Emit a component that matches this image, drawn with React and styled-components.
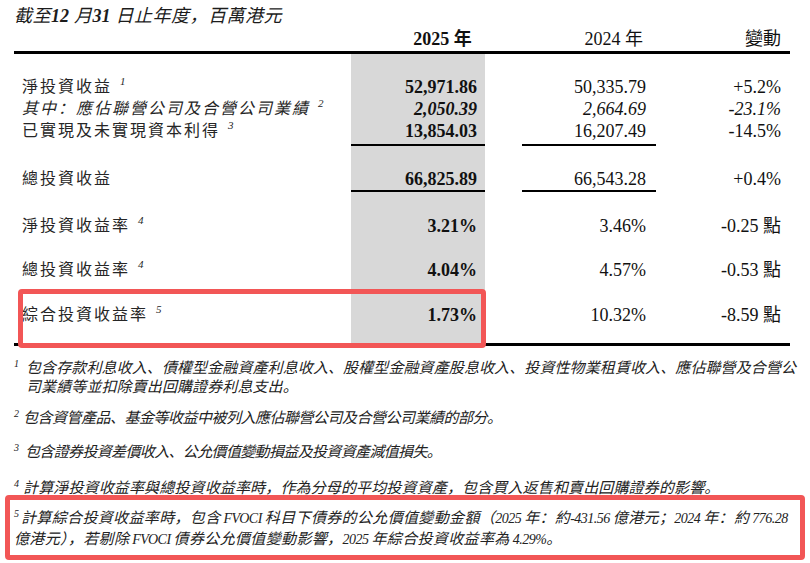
import React from 'react';
import styled, { createGlobalStyle, css } from 'styled-components';

const red = '#f25656';
const shade = '#d8d8d8';
const cjk = '"Liberation Serif", "Noto Sans CJK SC", "Noto Sans CJK TC", serif';

const GlobalStyle = createGlobalStyle`
  body {
    margin: 0;
    background: #fff;
    color: #111;
    font-family: ${cjk};
  }
`;

const Page = styled.div`
  width: 810px;
  box-sizing: border-box;
  padding: 5px 20px 0 14px;
`;

const Title = styled.div`
  font-size: 18px;
  line-height: 22px;
  font-style: italic;
  letter-spacing: 0.5px;
  color: #1c1c1c;
  white-space: nowrap;
`;

const TitleNum = styled.b`
  font-weight: bold;
  letter-spacing: 0;
`;

const Table = styled.div`
  width: 776px;
  border-bottom: 3px solid #000;
`;

const HeadRow = styled.div`
  display: flex;
  height: 24px;
  line-height: 24px;
  border-bottom: 3px solid #000;
  font-size: 18px;
`;

const Row = styled.div`
  display: flex;
  position: relative;
  line-height: 22px;
  font-style: ${p => (p.$italic ? 'italic' : 'normal')};

  & > * {
    box-sizing: border-box;
    padding-top: ${p => p.$pt || 0}px;
    padding-bottom: ${p => p.$pb || 0}px;
    min-height: ${p => p.$h || 0}px;
  }
`;

const Label = styled.div`
  width: 337px;
  padding-left: 8px;
  font-size: 16px;
  letter-spacing: 2px;
  color: #262626;
  white-space: nowrap;
`;

const Value = styled.div`
  width: 134px;
  text-align: right;
  font-size: 18px;
  padding-right: ${p => p.$pr}px;
  white-space: nowrap;
  font-weight: ${p => (p.$bold ? 'bold' : 'normal')};
  background: ${p => (p.$shade ? shade : 'transparent')};
  ${p =>
    p.$rule &&
    css`
      border-bottom: 2px solid #000;
    `}
`;

const Gap = styled.div`
  width: 37px;
`;

const Sup = styled.sup`
  font-family: "Liberation Serif", serif;
  font-style: italic;
  font-size: 11px;
  line-height: 0;
  vertical-align: 7px;
  letter-spacing: 0;
  margin-left: 8px;
`;

const Highlight = styled.div`
  position: absolute;
  z-index: 2;
  top: 8px;
  left: 4px;
  width: 468px;
  height: 59px;
  box-sizing: border-box;
  border: 5px solid ${red};
  border-radius: 4px;
  padding: 0 !important;
  min-height: 0 !important;
`;

const Notes = styled.div`
  padding-top: 13px;
`;

const Note = styled.div`
  margin-top: ${p => p.$mt}px;
  font-size: 15px;
  line-height: ${p => p.$lh || 19}px;
  font-style: italic;
  letter-spacing: ${p => p.$ls}px;
  color: #222;
  white-space: nowrap;
  padding-left: ${p => p.$hang || 0}px;
  text-indent: -${p => p.$hang || 0}px;
`;

const Mark = styled.span`
  display: inline-block;
  width: ${p => p.$w}px;
  text-indent: 0;
  font-family: "Liberation Serif", serif;
  font-size: 10px;
  letter-spacing: 0;
  vertical-align: 6px;
  line-height: 0;
`;

const Latin = styled.span`
  font-size: 14px;
  letter-spacing: -0.5px;
`;

const NoteBox = styled.div`
  margin-top: -3px;
  margin-left: -9px;
  width: 800px;
  box-sizing: border-box;
  border: 5px solid ${red};
  border-radius: 4px;
  padding: 8px 0 5px 4px;
`;

const rows = [
  { label: '淨投資收益', note: '1', v25: '52,971.86', v24: '50,335.79', chg: '+5.2%' },
  { label: '其中：應佔聯營公司及合營公司業績', note: '2', v25: '2,050.39', v24: '2,664.69', chg: '-23.1%', italic: true },
  { label: '已實現及未實現資本利得', note: '3', v25: '13,854.03', v24: '16,207.49', chg: '-14.5%', rule: true, pb: 2 },
  { label: '總投資收益', v25: '66,825.89', v24: '66,543.28', chg: '+0.4%', pt: 22, rule: true },
  { label: '淨投資收益率', note: '4', v25: '3.21%', v24: '3.46%', chg: '-0.25 點', pt: 23 },
  { label: '總投資收益率', note: '4', v25: '4.04%', v24: '4.57%', chg: '-0.53 點', pt: 22 },
  { label: '綜合投資收益率', note: '5', v25: '1.73%', v24: '10.32%', chg: '-8.59 點', pt: 23, pb: 17, highlight: true },
];

function App() {
  return (
    <Page>
      <GlobalStyle />
      <Title>
        截至<TitleNum>12</TitleNum> 月<TitleNum>31</TitleNum> 日止年度，百萬港元
      </Title>

      <Table>
        <HeadRow>
          <Label />
          <Value $pr={8} $bold>2025 年</Value>
          <Gap />
          <Value $pr={10}>2024 年</Value>
          <Value $pr={9}>變動</Value>
        </HeadRow>

        <Row $h={22}>
          <Label />
          <Value $pr={8} $shade />
          <Gap />
          <Value $pr={10} />
          <Value $pr={9} />
        </Row>

        {rows.map(r => (
          <Row key={r.label} $pt={r.pt} $pb={r.pb} $italic={r.italic}>
            <Label>
              {r.label}
              {r.note && <Sup>{r.note}</Sup>}
            </Label>
            <Value $pr={8} $shade $bold $rule={r.rule}>{r.v25}</Value>
            <Gap />
            <Value $pr={10} $rule={r.rule}>{r.v24}</Value>
            <Value $pr={9}>{r.chg}</Value>
            {r.highlight && <Highlight />}
          </Row>
        ))}
      </Table>

      <Notes>
        <Note $mt={0} $ls={0.1} $hang={12}>
          <Mark $w={12}>1</Mark>包含存款利息收入、債權型金融資產利息收入、股權型金融資產股息收入、投資性物業租賃收入、應佔聯營及合營公
          <br />
          司業績等並扣除賣出回購證券利息支出。
        </Note>
        <Note $mt={12} $ls={-0.5}>
          <Mark $w={9}>2</Mark>包含資管產品、基金等收益中被列入應佔聯營公司及合營公司業績的部分。
        </Note>
        <Note $mt={15} $ls={-0.65}>
          <Mark $w={11}>3</Mark>包含證券投資差價收入、公允價值變動損益及投資資產減值損失。
        </Note>
        <Note $mt={17} $ls={0.14}>
          <Mark $w={9}>4</Mark>計算淨投資收益率與總投資收益率時，作為分母的平均投資資產，包含買入返售和賣出回購證券的影響。
        </Note>
        <NoteBox>
          <Note $mt={0} $ls={0.35} $lh={20}>
            <Mark $w={7}>5</Mark>計算綜合投資收益率時，包含<Latin> FVOCI </Latin>科目下債券的公允價值變動金額（<Latin>2025 </Latin>年：約<Latin>-431.56 </Latin>億港元；<Latin>2024 </Latin>年：約<Latin> 776.28</Latin>
            <br />
            億港元），若剔除<Latin> FVOCI </Latin>債券公允價值變動影響，<Latin>2025 </Latin>年綜合投資收益率為<Latin> 4.29%</Latin>。
          </Note>
        </NoteBox>
      </Notes>
    </Page>
  );
}

export default App;
